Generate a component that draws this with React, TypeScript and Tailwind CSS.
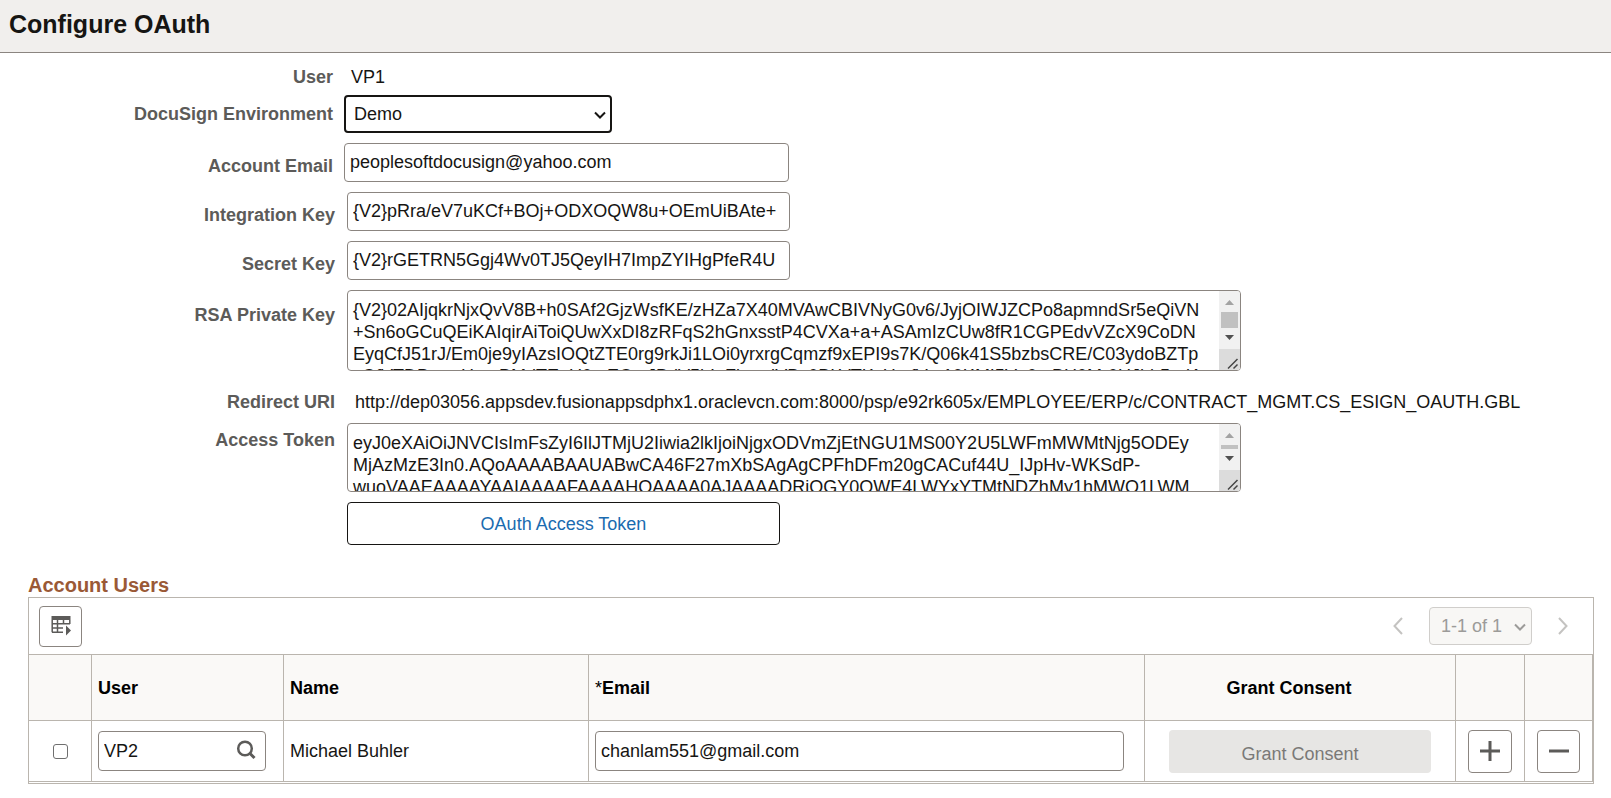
import { useState } from 'react';
import type { ReactNode } from 'react';

const RSA_KEY = [
  '{V2}02AIjqkrNjxQvV8B+h0SAf2GjzWsfKE/zHZa7X40MVAwCBIVNyG0v6/JyjOIWJZCPo8apmndSr5eQiVN',
  '+Sn6oGCuQEiKAIqirAiToiQUwXxDI8zRFqS2hGnxsstP4CVXa+a+ASAmIzCUw8fR1CGPEdvVZcX9CoDN',
  'EyqCfJ51rJ/Em0je9yIAzsIOQtZTE0rg9rkJi1LOi0yrxrgCqmzf9xEPI9s7K/Q06k41S5bzbsCRE/C03ydoBZTp',
  'sOfVTDBzwuHmpBMdTEnU0mECmJBdV5hIuFbuzdVBs0BLVTKyHetfVm10KMI5Vg0qtBH0Mr0UJhlr5pdA',
].join('\n');

const ACCESS_TOKEN = [
  'eyJ0eXAiOiJNVCIsImFsZyI6IlJTMjU2Iiwia2lkIjoiNjgxODVmZjEtNGU1MS00Y2U5LWFmMWMtNjg5ODEy',
  'MjAzMzE3In0.AQoAAAABAAUABwCA46F27mXbSAgAgCPFhDFm20gCACuf44U_IJpHv-WKSdP-',
  'wuoVAAEAAAAYAAIAAAAFAAAAHQAAAA0AJAAAADRiOGY0OWE4LWYxYTMtNDZhMy1hMWQ1LWM',
].join('\n');

const REDIRECT_URI =
  'http://dep03056.appsdev.fusionappsdphx1.oraclevcn.com:8000/psp/e92rk605x/EMPLOYEE/ERP/c/CONTRACT_MGMT.CS_ESIGN_OAUTH.GBL';

const inputClass = 'rounded border border-[#8b8580] bg-white px-[5px] text-lg text-[#161513]';
const iconButtonClass = 'flex items-center justify-center rounded border border-[#8b8580] bg-white text-[#5c5b59]';
const headClass = 'border-r border-b border-[#bab5ae] px-1.5 text-left font-bold text-black';
const cellClass = 'border-r border-b border-[#bab5ae] px-1.5';

interface LabelProps {
  htmlFor?: string;
  className?: string;
  children: ReactNode;
}

function Label({ htmlFor, className = '', children }: LabelProps) {
  return (
    <label htmlFor={htmlFor} className={`text-right font-bold leading-[22px] text-[#5c5b59] ${className}`}>
      {children}
    </label>
  );
}

interface ScrollAreaProps {
  id: string;
  value: string;
  onChange: (value: string) => void;
  heightClass: string;
  thumbClass: string;
}

function ScrollArea({ id, value, onChange, heightClass, thumbClass }: ScrollAreaProps) {
  return (
    <div className={`flex w-[894px] overflow-hidden rounded border border-[#8b8580] ${heightClass}`}>
      <textarea
        id={id}
        wrap="off"
        value={value}
        onChange={(e) => onChange(e.target.value)}
        className="min-w-0 flex-1 resize-none overflow-hidden py-2 pl-[5px] text-lg leading-[22px] text-[#161513]"
      />
      <div className="flex w-[21px] flex-col bg-[#f1f1f1]">
        <svg className="h-[21px] w-full" viewBox="0 0 21 21">
          <path d="M6 14h9l-4.500-5z" fill="#a3a3a3" />
        </svg>
        <div className={`mx-0.5 bg-[#c1c1c1] ${thumbClass}`} />
        <svg className="h-[21px] w-full" viewBox="0 0 21 21">
          <path d="M6 7h9l-4.500 5z" fill="#505050" />
        </svg>
        <svg className="mt-auto h-[21px] w-full bg-[#dcdcdc]" viewBox="0 0 21 21">
          <path d="M9 19.500L18.500 10M14.500 19.500L18.500 15.500" stroke="#444" strokeWidth="1.500" fill="none" />
        </svg>
      </div>
    </div>
  );
}

function Chevron({ className }: { className: string }) {
  return (
    <svg className={`pointer-events-none absolute ${className}`} width="12" height="8" viewBox="0 0 12 8">
      <path d="M1 1.500l5 5 5-5" fill="none" stroke="currentColor" strokeWidth="2" />
    </svg>
  );
}

export default function App() {
  const [environment, setEnvironment] = useState('Demo');
  const [email, setEmail] = useState('peoplesoftdocusign@yahoo.com');
  const [integrationKey, setIntegrationKey] = useState('{V2}pRra/eV7uKCf+BOj+ODXOQW8u+OEmUiBAte+');
  const [secretKey, setSecretKey] = useState('{V2}rGETRN5Ggj4Wv0TJ5QeyIH7ImpZYIHgPfeR4U');
  const [rsaKey, setRsaKey] = useState(RSA_KEY);
  const [token, setToken] = useState(ACCESS_TOKEN);
  const [rowUser, setRowUser] = useState('VP2');
  const [rowEmail, setRowEmail] = useState('chanlam551@gmail.com');

  return (
    <div className="bg-white font-['Liberation_Sans',Arial,sans-serif] text-lg leading-[22px] text-[#161513]">
      <header className="border-b border-[#8b8580] bg-[#f1efed] px-[9px] pt-2 pb-3">
        <h1 className="text-[25px] leading-8 font-bold">Configure OAuth</h1>
      </header>

      <main>
        <div className="grid grid-cols-[333px_1fr] grid-rows-[19px] items-start gap-x-[11px] gap-y-2.5 pt-[13px]">
          <Label>User</Label>
          <span className="pl-[7px]">VP1</span>

          <Label htmlFor="environment" className="pt-2">DocuSign Environment</Label>
          <div className="relative w-[268px]">
            <select
              id="environment"
              value={environment}
              onChange={(e) => setEnvironment(e.target.value)}
              className="h-[38px] w-full appearance-none rounded border-2 border-[#161513] bg-white pl-2 text-lg"
            >
              <option>Demo</option>
              <option>Production</option>
            </select>
            <Chevron className="top-4 right-1.5" />
          </div>

          <Label htmlFor="email" className="pt-3">Account Email</Label>
          <input
            id="email"
            value={email}
            onChange={(e) => setEmail(e.target.value)}
            className={`h-[39px] w-[445px] ${inputClass}`}
          />
        </div>

        <div className="grid grid-cols-[335px_1fr] items-start gap-x-3 gap-y-2.5 pt-2.5">
          <Label htmlFor="integration-key" className="pt-3">Integration Key</Label>
          <input
            id="integration-key"
            value={integrationKey}
            onChange={(e) => setIntegrationKey(e.target.value)}
            className={`h-[39px] w-[443px] ${inputClass}`}
          />

          <Label htmlFor="secret-key" className="pt-3">Secret Key</Label>
          <input
            id="secret-key"
            value={secretKey}
            onChange={(e) => setSecretKey(e.target.value)}
            className={`h-[39px] w-[443px] ${inputClass}`}
          />

          <Label htmlFor="rsa-key" className="pt-3.5">RSA Private Key</Label>
          <ScrollArea id="rsa-key" value={rsaKey} onChange={setRsaKey} heightClass="h-[81px]" thumbClass="h-4" />

          <Label className="pt-2.5">Redirect URI</Label>
          <span className="pt-2.5 pl-2">{REDIRECT_URI}</span>

          <Label htmlFor="token" className="pt-1.5">Access Token</Label>
          <ScrollArea id="token" value={token} onChange={setToken} heightClass="h-[69px]" thumbClass="h-1" />

          <button className="col-start-2 h-[43px] w-[433px] rounded border border-[#161513] text-[#1a6bb0]">
            OAuth Access Token
          </button>
        </div>

        <section className="mt-7 mr-[17px] ml-7">
          <h2 className="text-xl leading-6 font-bold text-[#9a5936]">Account Users</h2>
          <div className="border border-[#bab5ae] pb-px">
            <div className="flex h-14 items-center justify-between pr-[25px] pl-2.5">
              <button aria-label="Grid actions" className={`h-[41px] w-[43px] ${iconButtonClass}`}>
                <svg width="22" height="22" viewBox="0 0 22 22" fill="none">
                  <path d="M1.500 1h19v4h-19z" fill="currentColor" />
                  <path
                    d="M2.200 5v12.300M7.500 5v12.300M13.500 5v3.500M19.800 5v4M2 8.800h18M2 13h11M2 17.300h11"
                    stroke="currentColor"
                    strokeWidth="1.500"
                  />
                  <path d="M16 10.500l5 5-5 5z" fill="currentColor" />
                </svg>
              </button>
              <div className="flex items-center text-[#c4c3c1]">
                <button aria-label="Previous" disabled>
                  <svg width="10" height="18" viewBox="0 0 10 18" fill="none" stroke="currentColor" strokeWidth="2">
                    <path d="M9 1L1.500 9 9 17" />
                  </svg>
                </button>
                <div className="relative mx-[26px]">
                  <select
                    aria-label="Rows"
                    disabled
                    className="h-[38px] w-[103px] appearance-none rounded border border-[#d0cecb] bg-[#f8f7f5] pl-[11px] text-lg text-[#9c9b99] opacity-100"
                  >
                    <option>1-1 of 1</option>
                  </select>
                  <Chevron className="top-4 right-1.5 text-[#9c9b99]" />
                </div>
                <button aria-label="Next" disabled>
                  <svg width="10" height="18" viewBox="0 0 10 18" fill="none" stroke="currentColor" strokeWidth="2">
                    <path d="M1 1l7.500 8L1 17" />
                  </svg>
                </button>
              </div>
            </div>

            <table className="w-full table-fixed border-separate border-spacing-0 border-t border-[#bab5ae]">
              <colgroup>
                <col className="w-[63px]" />
                <col className="w-[192px]" />
                <col className="w-[305px]" />
                <col />
                <col className="w-[311px]" />
                <col className="w-[69px]" />
                <col className="w-[68px]" />
              </colgroup>
              <thead className="bg-[#faf9f7]">
                <tr className="h-[66px]">
                  <th className={headClass} />
                  <th className={headClass}>User</th>
                  <th className={headClass}>Name</th>
                  <th className={headClass}>
                    <span className="font-normal">*</span>Email
                  </th>
                  <th className="border-r border-b border-[#bab5ae] pr-[22px] text-center font-bold text-black">
                    Grant Consent
                  </th>
                  <th className={headClass} />
                  <th className={headClass} />
                </tr>
              </thead>
              <tbody>
                <tr className="h-[61px]">
                  <td className={cellClass}>
                    <input
                      type="checkbox"
                      aria-label="Select row"
                      className="mx-auto block size-[15px] appearance-none rounded-[3px] border border-[#6f6f6f] bg-white checked:bg-[#5c5b59]"
                    />
                  </td>
                  <td className={cellClass}>
                    <div className="flex h-10 w-[168px] items-center rounded border border-[#8b8580] pr-2">
                      <input
                        aria-label="User"
                        value={rowUser}
                        onChange={(e) => setRowUser(e.target.value)}
                        className="min-w-0 flex-1 pl-[5px]"
                      />
                      <button aria-label="Look up user" className="text-[#5c5b59]">
                        <svg width="22" height="22" viewBox="0 0 22 22" fill="none" stroke="currentColor">
                          <circle cx="10" cy="8.500" r="6.800" strokeWidth="2.500" />
                          <path d="M14.500 13l5 5" strokeWidth="3" />
                        </svg>
                      </button>
                    </div>
                  </td>
                  <td className={cellClass}>Michael Buhler</td>
                  <td className="border-r border-b border-[#bab5ae] pr-5 pl-1.5">
                    <input
                      aria-label="Email"
                      value={rowEmail}
                      onChange={(e) => setRowEmail(e.target.value)}
                      className={`block h-10 w-full ${inputClass}`}
                    />
                  </td>
                  <td className={cellClass}>
                    <button disabled className="mx-auto block h-[43px] w-[262px] rounded bg-[#e7e6e4] pt-1.5 text-[#7a7977]">
                      Grant Consent
                    </button>
                  </td>
                  <td className={cellClass}>
                    <button aria-label="Add row" className={`mx-auto h-[43px] w-11 ${iconButtonClass}`}>
                      <svg width="20" height="20" viewBox="0 0 20 20" stroke="currentColor" strokeWidth="3">
                        <path d="M0 10h20M10 0v20" />
                      </svg>
                    </button>
                  </td>
                  <td className={cellClass}>
                    <button aria-label="Delete row" className={`mx-auto size-[43px] ${iconButtonClass}`}>
                      <svg width="20" height="20" viewBox="0 0 20 20" stroke="currentColor" strokeWidth="3">
                        <path d="M0 10h20" />
                      </svg>
                    </button>
                  </td>
                </tr>
              </tbody>
            </table>
          </div>
        </section>
      </main>
    </div>
  );
}
